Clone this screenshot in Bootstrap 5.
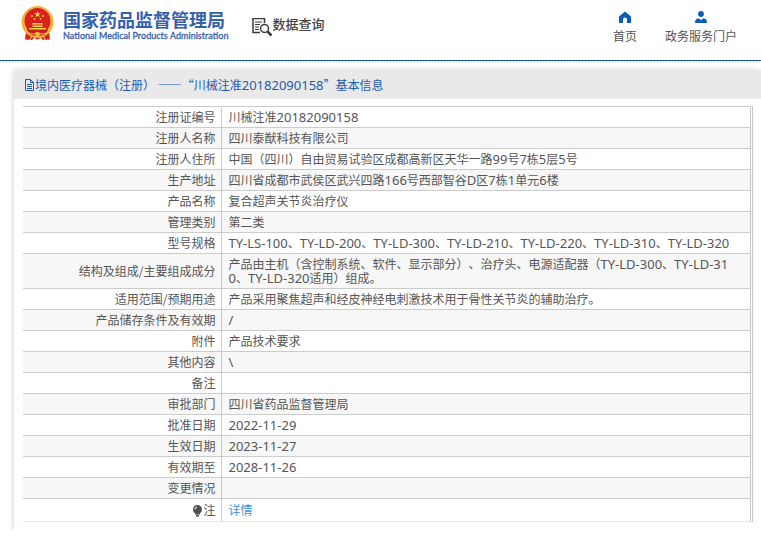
<!DOCTYPE html>
<html lang="zh-CN">
<head>
<meta charset="utf-8">
<meta name="viewport" content="width=device-width, initial-scale=1">
<title>国家药品监督管理局 数据查询</title>
<link href="https://cdn.jsdelivr.net/npm/bootstrap@5.3.0/dist/css/bootstrap.min.css" rel="stylesheet">
<style>
body{font-family:"Noto Sans CJK SC",sans-serif;font-size:12px;line-height:14px;color:#555;background:#fff;font-kerning:none;font-feature-settings:"chws" 0,"halt" 0,"kern" 0;text-spacing-trim:space-all}
.site-head{height:61px;border-bottom:1px solid #1a56a0}
.dots{height:2px;background:repeating-linear-gradient(90deg,#cfe3f4 0 1px,#fff 1px 3px)}
.brand{color:#3560ab;padding-left:21px}
.brand-text{padding:8px 0 0 9px}
.brand-cn{font-size:18px;font-weight:700;line-height:22px}
.brand-en{font-family:Lato,sans-serif;font-size:9px;line-height:12px;-webkit-text-stroke:.3px #3560ab}
.query{font-size:13px;line-height:20px;color:#444;font-weight:500;margin-left:24px;padding-top:14px}
.top-nav{gap:28px;padding:11px 24px 0 0}
.top-nav a{color:#555;line-height:18px}
.top-nav svg{margin-bottom:4px}
.panel{margin:8px 0 0 14px;padding-bottom:8px;box-shadow:0 0 6px rgba(0,0,0,.22)}
.panel-title{background:#e9e9e9;color:#1c5bb0;font-size:12px;line-height:28px;padding-left:10px}
.table-area{padding:7px 8px 0 9px}
.info{border-collapse:collapse;table-layout:fixed;border-top:1px solid #ccc;border-right:3px double #c6c8cc;border-bottom:1px solid #e6e6e6}
.info th{width:198px;font-weight:400;text-align:right;padding:3px 5px 3px 0;border-right:1px solid #ccc}
.info td{padding:3px 16px 3px 7px;word-break:break-all}
.info th,.info td{height:21px;vertical-align:middle;border-bottom:1px solid #ccc}
.info tr:nth-child(even){background:#f7f7f7}
.info tr:last-child>*{height:23px;border-bottom-color:#e6e6e6}
.info a{color:#3c8fdc}
.lat{font-family:"Noto Sans",sans-serif;font-size:13px;line-height:14px}
</style>
<script src="https://cdn.jsdelivr.net/npm/bootstrap@5.3.0/dist/js/bootstrap.bundle.min.js"></script>
</head>
<body>
<header class="site-head d-flex align-items-start">
  <div class="brand d-flex">
    <svg class="mt-1" width="33" height="38" viewBox="0 0 33 38" aria-hidden="true">
      <path d="M5 27 4 35.500l7 .5 2-2 3.500 1.500 3.500-1.500 2 2 7-.5-1-8.500z" fill="#d3231c"/>
      <circle cx="16.500" cy="18" r="16" fill="#f0b43c"/>
      <circle cx="16.500" cy="17" r="13" fill="#d9201b"/>
      <path d="M6 25h21l-2 5q-8.500 4-17 0z" fill="#c81e18"/>
      <path d="m16.500 7 .9 2.300h2.400l-1.900 1.500.7 2.400-2.100-1.400-2.100 1.400.7-2.400-1.900-1.500h2.400z" fill="#fbd34d"/>
      <g fill="#fbd34d"><circle cx="11" cy="12" r="1"/><circle cx="22" cy="12" r="1"/><circle cx="13.500" cy="15" r=".9"/><circle cx="19.500" cy="15" r=".9"/><path d="M12 19h9l1.500 1.500h-12zM11.500 21.500h10V23h-10zM8 24h17v1.500H8z"/></g>
      <path d="M7 28.500q4.500 3 9.500 0 5 3 9.500 0" fill="none" stroke="#f0b43c" stroke-width="1.200"/>
      <circle cx="16.500" cy="30.500" r="2.300" fill="#f0b43c"/>
      <path d="m9 36 1.500-4M24 36l-1.500-4M13 34.500l1-2M20 34.500l-1-2" stroke="#f6cf62"/>
    </svg>
    <div class="brand-text">
      <div class="brand-cn">国家药品监督管理局</div>
      <div class="brand-en">National Medical Products Administration</div>
    </div>
  </div>
  <div class="query d-flex">
    <svg class="mt-1" width="20" height="19" viewBox="0 0 20 19" fill="none" stroke="#3b3b3f" aria-hidden="true">
      <path d="M8 14.500H1V.5h11.500V5" stroke-width="1.500"/>
      <path d="M3 4h7M3 6.500h5M3 9h4M3 11.500h4"/>
      <circle cx="12.500" cy="10.500" r="4" stroke-width="1.500"/><path d="m15.500 13.500 4 4" stroke-width="2.500"/>
    </svg>
    <span>数据查询</span>
  </div>
  <nav class="top-nav d-flex ms-auto text-center">
    <a class="text-decoration-none d-flex flex-column align-items-center" href="#">
      <svg width="12" height="12" viewBox="0 0 12 12" aria-hidden="true"><path d="M6 .5 12 5.500V12H8V8.500a2 2 0 0 0-4 0V12H0V5.500z" fill="#0b5cb8"/></svg>
      <span>首页</span></a>
    <a class="text-decoration-none d-flex flex-column align-items-center" href="#">
      <svg width="12" height="12" viewBox="0 0 12 12" aria-hidden="true"><circle cx="6" cy="3" r="2.900" fill="#0b5cb8"/><path d="M0 12q0-4.500 3.500-4.800L6 9.200l2.500-2Q12 7.500 12 12z" fill="#0b5cb8"/></svg>
      <span>政务服务门户</span></a>
  </nav>
</header>
<div class="dots"></div>
<main class="panel">
  <h1 class="panel-title m-0 fw-normal d-flex align-items-center">
    <svg width="11" height="12" viewBox="0 0 11 12" fill="none" stroke="#1c5bb0" aria-hidden="true"><path d="M1.500.5h5l3 3v8h-8zM6.500.5v3h3M3 5.500h5M3 7.500h5M3 9.500h5"/></svg>
    <span>境内医疗器械（注册） ——“川械注准<span class="lat">20182090158</span>”基本信息</span>
  </h1>
  <div class="table-area">
    <table class="info w-100">
      <tbody>
      <tr><th scope="row">注册证编号</th><td>川械注准<span class="lat">20182090158</span></td></tr>
      <tr><th scope="row">注册人名称</th><td>四川泰猷科技有限公司</td></tr>
      <tr><th scope="row">注册人住所</th><td>中国（四川）自由贸易试验区成都高新区天华一路<span class="lat">99</span>号<span class="lat">7</span>栋<span class="lat">5</span>层<span class="lat">5</span>号</td></tr>
      <tr><th scope="row">生产地址</th><td>四川省成都市武侯区武兴四路<span class="lat">166</span>号西部智谷<span class="lat">D</span>区<span class="lat">7</span>栋<span class="lat">1</span>单元<span class="lat">6</span>楼</td></tr>
      <tr><th scope="row">产品名称</th><td>复合超声关节炎治疗仪</td></tr>
      <tr><th scope="row">管理类别</th><td>第二类</td></tr>
      <tr><th scope="row">型号规格</th><td><span class="lat">TY-LS-100</span>、<span class="lat">TY-LD-200</span>、<span class="lat">TY-LD-300</span>、<span class="lat">TY-LD-210</span>、<span class="lat">TY-LD-220</span>、<span class="lat">TY-LD-310</span>、<span class="lat">TY-LD-320</span></td></tr>
      <tr><th scope="row">结构及组成/主要组成成分</th><td>产品由主机（含控制系统、软件、显示部分）、治疗头、电源适配器（<span class="lat">TY-LD-300</span>、<span class="lat">TY-LD-310</span>、<span class="lat">TY-LD-320</span>适用）组成。</td></tr>
      <tr><th scope="row">适用范围/预期用途</th><td>产品采用聚焦超声和经皮神经电刺激技术用于骨性关节炎的辅助治疗。</td></tr>
      <tr><th scope="row">产品储存条件及有效期</th><td><span class="lat">/</span></td></tr>
      <tr><th scope="row">附件</th><td>产品技术要求</td></tr>
      <tr><th scope="row">其他内容</th><td><span class="lat">\</span></td></tr>
      <tr><th scope="row">备注</th><td></td></tr>
      <tr><th scope="row">审批部门</th><td>四川省药品监督管理局</td></tr>
      <tr><th scope="row">批准日期</th><td><span class="lat">2022-11-29</span></td></tr>
      <tr><th scope="row">生效日期</th><td><span class="lat">2023-11-27</span></td></tr>
      <tr><th scope="row">有效期至</th><td><span class="lat">2028-11-26</span></td></tr>
      <tr><th scope="row">变更情况</th><td></td></tr>
      <tr><th scope="row"><svg width="11" height="12" viewBox="0 0 10 12" aria-hidden="true"><path d="M5 0a4.500 4.500 0 0 1 2.500 8.200V9.500h-5V8.200A4.500 4.500 0 0 1 5 0M3.500 10h3v1.500h-3z" fill="#505050"/><path d="M2.500 4.500Q2.500 2.500 4.500 2" fill="none" stroke="#fff"/></svg>注</th><td><a class="text-decoration-none" href="#">详情</a></td></tr>
      </tbody>
    </table>
  </div>
</main>
</body>
</html>
